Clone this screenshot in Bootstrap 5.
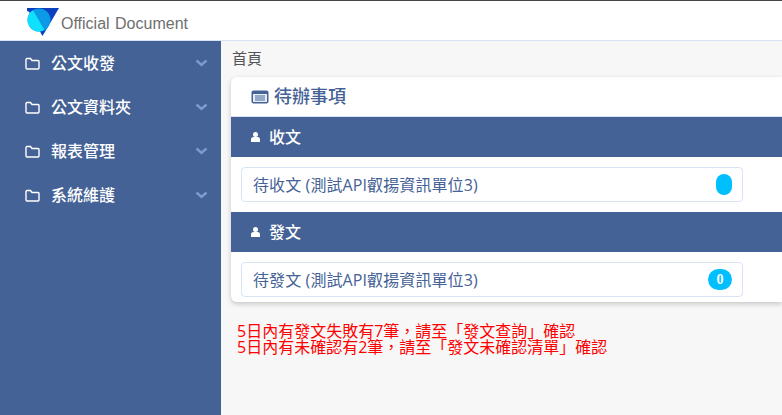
<!DOCTYPE html>
<html lang="zh-Hant">

<head>
  <meta charset="UTF-8" />
  <title>Official Document</title>
  <link href="https://cdn.jsdelivr.net/npm/bootstrap@5.3.2/dist/css/bootstrap.min.css" rel="stylesheet" />
  <style>
    html,
    body {
      height: 100%;
      overflow: hidden;
    }

    body {
      background: #f7f7f7;
      font-family: "Open Sans", "Noto Sans CJK TC", sans-serif;
      font-size: 16px;
      color: #555;
    }

    .top-bar {
      height: 41px;
      background: #fff;
      border-top: 1px solid #444;
      border-bottom: 1px solid #d8e4f5;
      padding-left: 27px;
    }

    .logo-mark {
      margin-top: 3px;
    }

    .logo-text {
      font-family: "Liberation Sans", sans-serif;
      font-size: 16px;
      color: #6f6f6f;
      margin-left: 1px;
      margin-top: 7px;
      word-spacing: 1px;
    }

    .main-area {
      height: 374px;
    }

    .side-menu {
      width: 221px;
      background: #446296;
    }

    .side-item {
      height: 44px;
      padding: 0 13px 0 25px;
      color: #fff;
      font-weight: 500;
      font-size: 16px;
    }

    .side-item span {
      margin-left: 11px;
    }

    .side-item .chev {
      margin-left: auto;
    }

    .content-area {
      width: 561px;
      padding-left: 10px;
    }

    .crumb {
      height: 36px;
      padding: 6px 0 0 1px;
      font-size: 15px;
      line-height: 22px;
    }

    .todo-box {
      height: 225px;
      background: #fff;
      border-radius: 6px 0 0 6px;
      box-shadow: 0 2px 5px rgba(0, 0, 0, .2);
    }

    .todo-title {
      height: 40px;
      padding-left: 20px;
      color: #446296;
      font-size: 18px;
      font-weight: 500;
      border-bottom: 1px solid #d8e4f5;
    }

    .todo-title span {
      margin-left: 5px;
    }

    .band {
      height: 40px;
      background: #446296;
      color: #fff;
      font-weight: 500;
      font-size: 16px;
      padding-left: 20px;
    }

    .band span {
      margin-left: 9px;
    }

    .todo-row {
      width: 502px;
      height: 35px;
      margin: 10px 0 10px 10px;
      padding: 0 10px 0 11px;
      border: 1px solid #d8e4f5;
      border-radius: 4px;
      color: #446296;
      font-size: 16px;
      letter-spacing: .1px;
    }

    .count-pill {
      margin-left: auto;
      background: #00bfff;
      color: #fff;
      border-radius: 11px;
      height: 21px;
      width: 24px;
      text-align: center;
      font-family: "Liberation Serif", serif;
      font-size: 14px;
      font-weight: 700;
      line-height: 21px;
    }

    .count-pill.is-empty {
      width: 16px;
    }

    .alert-lines {
      margin: 21px 0 0 6px;
      color: #f00;
      font-size: 16px;
      line-height: 16px;
      white-space: nowrap;
    }
  </style>
</head>

<body>
  <div class="top-bar d-flex align-items-center">
    <svg class="logo-mark" width="33" height="28" viewBox="0 0 33 28">
      <path d="M0 0H32L15.500 28Z" fill="#0a3fc0" />
      <circle cx="12" cy="12" r="11.500" fill="#0a9ae8" />
      <path d="M.5 12A11.500 11.500 0 0 0 17.500 22L6 2.200A11.500 11.500 0 0 0 .5 12Z" fill="#0fe0fb" />
      <path d="M0 0H5.500L3 4L0 3Z" fill="#0a3fc0" />
    </svg>
    <div class="logo-text">Official Document</div>
  </div>

  <div class="main-area d-flex">
    <nav class="side-menu">
      <div class="side-item d-flex align-items-center">
        <svg width="15" height="13" viewBox="0 0 15 13" fill="none" stroke="#fff" stroke-width="1.400">
          <path d="M1 3V11Q1 12 2 12H13Q14 12 14 11V4.500Q14 3.500 13 3.500H7L5.500 1.500H2Q1 1.500 1 3Z" />
        </svg>
        <span>公文收發</span>
        <svg class="chev" width="13" height="8" viewBox="0 0 13 8" fill="none" stroke="#7f9bcb" stroke-width="2.400">
          <path d="M1.500 1.500L6.500 6L11.500 1.500" />
        </svg>
      </div>
      <div class="side-item d-flex align-items-center">
        <svg width="15" height="13" viewBox="0 0 15 13" fill="none" stroke="#fff" stroke-width="1.400">
          <path d="M1 3V11Q1 12 2 12H13Q14 12 14 11V4.500Q14 3.500 13 3.500H7L5.500 1.500H2Q1 1.500 1 3Z" />
        </svg>
        <span>公文資料夾</span>
        <svg class="chev" width="13" height="8" viewBox="0 0 13 8" fill="none" stroke="#7f9bcb" stroke-width="2.400">
          <path d="M1.500 1.500L6.500 6L11.500 1.500" />
        </svg>
      </div>
      <div class="side-item d-flex align-items-center">
        <svg width="15" height="13" viewBox="0 0 15 13" fill="none" stroke="#fff" stroke-width="1.400">
          <path d="M1 3V11Q1 12 2 12H13Q14 12 14 11V4.500Q14 3.500 13 3.500H7L5.500 1.500H2Q1 1.500 1 3Z" />
        </svg>
        <span>報表管理</span>
        <svg class="chev" width="13" height="8" viewBox="0 0 13 8" fill="none" stroke="#7f9bcb" stroke-width="2.400">
          <path d="M1.500 1.500L6.500 6L11.500 1.500" />
        </svg>
      </div>
      <div class="side-item d-flex align-items-center">
        <svg width="15" height="13" viewBox="0 0 15 13" fill="none" stroke="#fff" stroke-width="1.400">
          <path d="M1 3V11Q1 12 2 12H13Q14 12 14 11V4.500Q14 3.500 13 3.500H7L5.500 1.500H2Q1 1.500 1 3Z" />
        </svg>
        <span>系統維護</span>
        <svg class="chev" width="13" height="8" viewBox="0 0 13 8" fill="none" stroke="#7f9bcb" stroke-width="2.400">
          <path d="M1.500 1.500L6.500 6L11.500 1.500" />
        </svg>
      </div>
    </nav>

    <main class="content-area">
      <div class="crumb">首頁</div>
      <div class="todo-box">
        <div class="todo-title d-flex align-items-center">
          <svg width="18" height="14" viewBox="0 0 18 14">
            <rect x=".5" y=".5" width="17" height="13" rx="2" fill="#446296" />
            <rect x="2" y="4" width="14" height="8" fill="#e8eef8" />
            <path d="M4 6H14M4 8H14M4 10H14" stroke="#446296" />
          </svg>
          <span>待辦事項</span>
        </div>
        <div class="band d-flex align-items-center">
          <svg width="9" height="10" viewBox="0 0 9 10" fill="#fff">
            <circle cx="4.500" cy="2.500" r="2.500" />
            <path d="M0 10V7.500Q0 5 2.500 5H6.500Q9 5 9 7.500V10Z" />
          </svg>
          <span>收文</span>
        </div>
        <div class="todo-row d-flex align-items-center">
          待收文 (測試API叡揚資訊單位3)
          <div class="count-pill is-empty"></div>
        </div>
        <div class="band d-flex align-items-center">
          <svg width="9" height="10" viewBox="0 0 9 10" fill="#fff">
            <circle cx="4.500" cy="2.500" r="2.500" />
            <path d="M0 10V7.500Q0 5 2.500 5H6.500Q9 5 9 7.500V10Z" />
          </svg>
          <span>發文</span>
        </div>
        <div class="todo-row d-flex align-items-center">
          待發文 (測試API叡揚資訊單位3)
          <div class="count-pill">0</div>
        </div>
      </div>
      <div class="alert-lines">
        5日內有發文失敗有7筆，請至「發文查詢」確認<br />
        5日內有未確認有2筆，請至「發文未確認清單」確認
      </div>
    </main>
  </div>

  <script src="https://cdn.jsdelivr.net/npm/bootstrap@5.3.2/dist/js/bootstrap.bundle.min.js"></script>
</body>

</html>
